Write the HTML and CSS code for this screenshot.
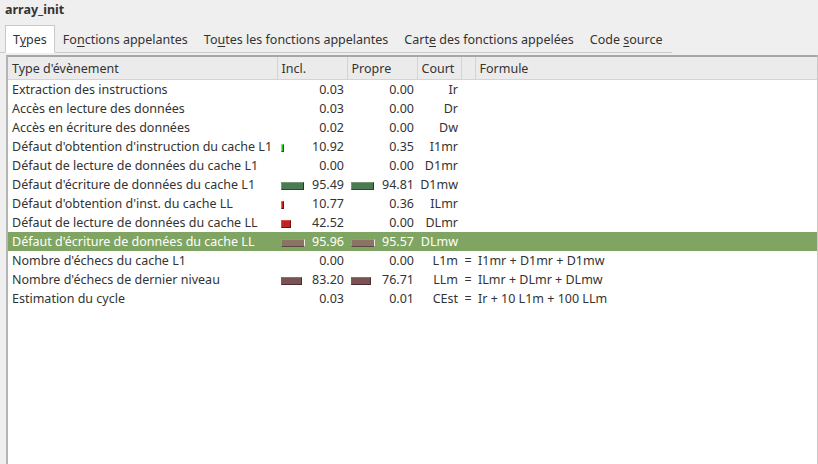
FILE: index.html
```html
<!DOCTYPE html>
<html lang="fr">
<head>
<meta charset="utf-8">
<title>array_init</title>
<link rel="stylesheet" href="styles.css">
</head>
<body>
<div class="title">array_init</div>
<div class="tabs">
  <div class="tab active">T<u>y</u>pes</div>
  <div class="tab">Fo<u>n</u>ctions appelantes</div>
  <div class="tab">To<u>u</u>tes les fonctions appelantes</div>
  <div class="tab">Cart<u>e</u> des fonctions appelées</div>
  <div class="tab">Code <u>s</u>ource</div>
</div>
<div class="frame">
  <table class="grid">
    <colgroup>
      <col class="c-name"><col class="c-num"><col class="c-num"><col class="c-short"><col class="c-eq"><col class="c-formula">
    </colgroup>
    <thead>
      <tr><th>Type d'évènement</th><th>Incl.</th><th>Propre</th><th>Court</th><th></th><th>Formule</th></tr>
    </thead>
    <tbody>
      <tr><td class="name">Extraction des instructions</td><td class="num"><span class="v">0.03</span></td><td class="num"><span class="v">0.00</span></td><td class="short">Ir</td><td></td><td></td></tr>
      <tr><td class="name">Accès en lecture des données</td><td class="num"><span class="v">0.03</span></td><td class="num"><span class="v">0.00</span></td><td class="short">Dr</td><td></td><td></td></tr>
      <tr><td class="name">Accès en écriture des données</td><td class="num"><span class="v">0.02</span></td><td class="num"><span class="v">0.00</span></td><td class="short">Dw</td><td></td><td></td></tr>
      <tr><td class="name">Défaut d'obtention d'instruction du cache L1</td><td class="num"><span class="bar b-i1" style="width:3px"></span><span class="v">10.92</span></td><td class="num"><span class="v">0.35</span></td><td class="short">I1mr</td><td></td><td></td></tr>
      <tr><td class="name">Défaut de lecture de données du cache L1</td><td class="num"><span class="v">0.00</span></td><td class="num"><span class="v">0.00</span></td><td class="short">D1mr</td><td></td><td></td></tr>
      <tr><td class="name">Défaut d'écriture de données du cache L1</td><td class="num"><span class="bar b-d1w" style="width:23px"></span><span class="v">95.49</span></td><td class="num"><span class="bar b-d1w" style="width:23px"></span><span class="v">94.81</span></td><td class="short">D1mw</td><td></td><td></td></tr>
      <tr><td class="name">Défaut d'obtention d'inst. du cache LL</td><td class="num"><span class="bar b-ilr" style="width:3px"></span><span class="v">10.77</span></td><td class="num"><span class="v">0.36</span></td><td class="short">ILmr</td><td></td><td></td></tr>
      <tr><td class="name">Défaut de lecture de données du cache LL</td><td class="num"><span class="bar b-dlr" style="width:10px"></span><span class="v">42.52</span></td><td class="num"><span class="v">0.00</span></td><td class="short">DLmr</td><td></td><td></td></tr>
      <tr class="sel"><td class="name">Défaut d'écriture de données du cache LL</td><td class="num"><span class="bar b-dlw" style="width:24px"></span><span class="v">95.96</span></td><td class="num"><span class="bar b-dlw" style="width:24px"></span><span class="v">95.57</span></td><td class="short">DLmw</td><td></td><td></td></tr>
      <tr><td class="name">Nombre d'échecs du cache L1</td><td class="num"><span class="v">0.00</span></td><td class="num"><span class="v">0.00</span></td><td class="short">L1m</td><td class="eq">=</td><td class="formula">I1mr + D1mr + D1mw</td></tr>
      <tr><td class="name">Nombre d'échecs de dernier niveau</td><td class="num"><span class="bar b-llm" style="width:21px"></span><span class="v">83.20</span></td><td class="num"><span class="bar b-llm" style="width:20px"></span><span class="v">76.71</span></td><td class="short">LLm</td><td class="eq">=</td><td class="formula">ILmr + DLmr + DLmw</td></tr>
      <tr><td class="name">Estimation du cycle</td><td class="num"><span class="v">0.03</span></td><td class="num"><span class="v">0.01</span></td><td class="short">CEst</td><td class="eq">=</td><td class="formula">Ir + 10 L1m + 100 LLm</td></tr>
    </tbody>
  </table>
</div>
</body>
</html>
```

FILE: styles.css
```css
html, body {
  margin: 0;
  height: 100%;
}
body {
  background: #efefef;
  color: #333;
  font-family: "Noto Sans", "DejaVu Sans", sans-serif;
  font-size: 12.5px;
  display: flex;
  flex-direction: column;
  overflow: hidden;
}
.title {
  font-weight: bold;
  padding: 2px 0 0 5px;
  height: 24px;
  line-height: 16px;
  box-sizing: border-box;
}
.tabs {
  display: flex;
  align-items: flex-end;
  height: 29px;
  padding-left: 5px;
  margin-right: 146px;
  border-bottom: 1px solid #c9c9c9;
  box-sizing: border-box;
}
.tab {
  height: 26px;
  line-height: 26px;
  padding: 0 8px;
  box-sizing: border-box;
  margin-bottom: -1px;
}
.tab + .tab {
  margin-left: 0;
}
.tab.active {
  background: #fff;
  border: 1px solid #c9c9c9;
  border-bottom-color: #fff;
  height: 28px;
  line-height: 28px;
  padding: 0 7px;
}
.tab u {
  text-decoration-thickness: 1px;
  text-underline-offset: 2px;
}
.frame {
  flex: 1;
  margin: 2px 0 0 6px;
  border-top: 2px solid #a6a6a6;
  border-left: 2px solid #b4b4b4;
  border-right: 1px solid #c8c8c8;
  background: #fff;
  overflow: hidden;
}
.grid {
  border-collapse: collapse;
  table-layout: fixed;
  width: 100%;
}
.c-name { width: 269px; }
.c-num { width: 70px; }
.c-short { width: 44px; }
.c-eq { width: 14px; }
.grid th {
  background: #ebebeb;
  font-weight: normal;
  text-align: left;
  height: 22px;
  padding: 0 0 0 4px;
  border-right: 1px solid #d4d4d4;
  border-bottom: 1px solid #d4d4d4;
  white-space: nowrap;
}
.grid th:last-child { border-right: none; }
.grid td {
  height: 19px;
  padding: 0;
  white-space: nowrap;
  overflow: hidden;
}
.grid td.name { padding-left: 4px; }
.grid td.num { padding: 0 3px 0 4px; }
.num {
  text-align: right;
}
.num .bar { float: left; margin-top: 6px; }
.grid td.short { text-align: right; padding-right: 3px; }
.grid td.eq { text-align: center; }
.grid td.formula { padding-left: 3px; }
.sel td {
  background: #80a562;
  color: #fff;
}
.bar {
  display: inline-block;
  height: 8px;
  box-sizing: border-box;
  border-style: solid;
  border-width: 1px 1px 1px 1px;
}
.b-i1 { background: #22c422; border-color: #7ae87a #0a6a0a #0a6a0a #7ae87a; }
.b-d1w { background: #4e7a52; border-color: #6f9a72 #1f3a22 #2a4a2c #6f9a72; }
.b-ilr { background: #d01c1c; border-color: #ff5a5a #7a0a0a #7a0a0a #ff5a5a; }
.b-dlr { background: #c02326; border-color: #e04a4c #701010 #701010 #e04a4c; }
.b-dlw { background: #8b7465; border-color: #a89284 #f0ece8 #5c4a3e #a89284; }
.b-llm { background: #7a5254; border-color: #9a6a6c #4a2e30 #4a2e30 #e03030; }
```
